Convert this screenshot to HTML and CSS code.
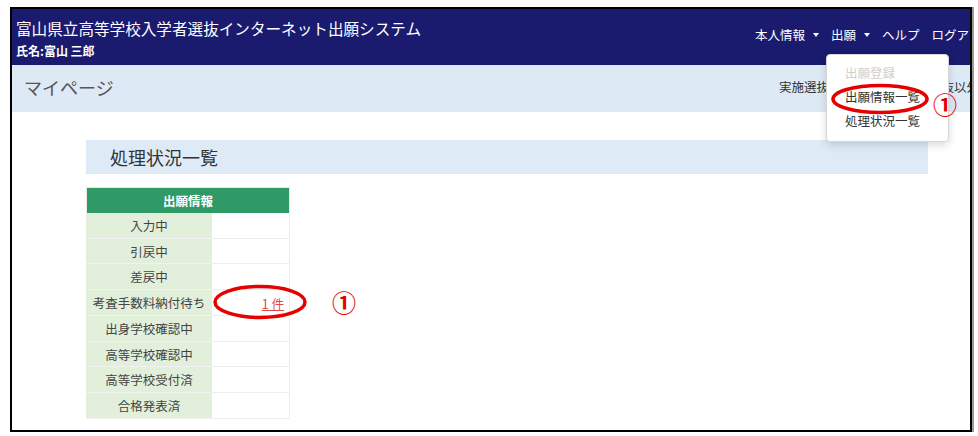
FILE: index.html
```html
<!DOCTYPE html>
<html lang="ja">
<head>
<meta charset="utf-8">
<title>処理状況一覧</title>
<link rel="stylesheet" href="styles.css">
</head>
<body>
<div class="frame">
  <div class="page">
    <header class="navbar">
      <div class="brand">
        <div class="title">富山県立高等学校入学者選抜インターネット出願システム</div>
        <div class="user">氏名:富山 三郎</div>
      </div>
      <nav class="menu">
        <span class="item">本人情報<span class="caret"></span></span>
        <span class="item dd">出願<span class="caret"></span>
          <div class="dropdown">
            <div class="dd-item disabled">出願登録</div>
            <div class="dd-item">出願情報一覧</div>
            <div class="dd-item">処理状況一覧</div>
            <svg class="mark mark-dd" width="100" height="32" viewBox="0 0 100 32"><ellipse cx="50" cy="16" rx="47" ry="13.5" fill="none" stroke="#e60000" stroke-width="3.5"/></svg>
            <span class="num num-dd">①</span>
          </div>
        </span>
        <span class="item">ヘルプ</span>
        <span class="item">ログアウト</span>
      </nav>
    </header>
    <div class="pagehead">
      <h1 class="pagetitle">マイページ</h1>
      <span class="info">実施選抜：一般選抜・特色選抜以外</span>
    </div>
    <main class="container">
      <h2 class="section">処理状況一覧</h2>
      <div class="status">
        <div class="grid">
          <div class="head">出願情報</div>
          <div class="lbl">入力中</div><div class="val"></div>
          <div class="lbl">引戻中</div><div class="val"></div>
          <div class="lbl">差戻中</div><div class="val"></div>
          <div class="lbl">考査手数料納付待ち</div><div class="val"><a class="count" href="#">1&nbsp;件</a></div>
          <div class="lbl">出身学校確認中</div><div class="val"></div>
          <div class="lbl">高等学校確認中</div><div class="val"></div>
          <div class="lbl">高等学校受付済</div><div class="val"></div>
          <div class="lbl">合格発表済</div><div class="val"></div>
        </div>
        <svg class="mark mark-tbl" width="96" height="36" viewBox="0 0 96 36"><ellipse cx="48" cy="18" rx="45" ry="15.5" fill="none" stroke="#e60000" stroke-width="3.5"/></svg>
        <span class="num num-tbl">①</span>
      </div>
    </main>
  </div>
</div>
</body>
</html>
```

FILE: styles.css
```css
* { box-sizing: border-box; }
html, body { margin: 0; padding: 0; background: #fff; }
body {
  font-family: "Noto Sans CJK JP", "Noto Sans", sans-serif;
  color: #333;
}
.frame {
  margin: 7px 0 0 10px;
  width: 962px;
  height: 425px;
  border: 2px solid #000;
  box-shadow: 1px 1px 0 1px #9a9a9a;
  overflow: hidden;
}
.page {
  width: 1000px;
  position: relative;
}
.navbar {
  display: flex;
  justify-content: space-between;
  background: #1a1a6e;
  height: 56px;
  padding: 0 18px 0 4px;
  color: #fff;
}
.brand {
  padding-top: 8px;
}
.title {
  font-size: 15.6px;
  line-height: 22px;
}
.user {
  font-size: 12px;
  font-weight: bold;
  line-height: 18px;
  margin-top: 3px;
}
.menu {
  display: flex;
  gap: 12px;
  padding-top: 17px;
  align-self: flex-start;
}
.item {
  font-size: 12.5px;
  line-height: 18px;
  display: flex;
  align-items: center;
  white-space: nowrap;
}
.caret {
  display: inline-block;
  margin-left: 8px;
  width: 0;
  height: 0;
  border-top: 4px solid #fff;
  border-left: 3.5px solid transparent;
  border-right: 3.5px solid transparent;
}
.dd { position: relative; }
.dropdown {
  position: absolute;
  top: 28px;
  left: -5px;
  width: 123px;
  background: #fff;
  border: 1px solid #d6d6d6;
  border-radius: 4px;
  box-shadow: 0 3px 8px rgba(0,0,0,0.15);
  padding: 6px 0 8px;
  z-index: 10;
}
.dd-item {
  font-size: 12.5px;
  line-height: 24px;
  color: #333;
  padding-left: 18px;
}
.dd-item.disabled { color: #cfcfcf; }
.mark { position: absolute; }
.num {
  position: absolute;
  color: #e60000;
  font-size: 24px;
  line-height: 24px;
  font-weight: bold;
}
.mark-dd { left: 3px; top: 28px; }
.num-dd { left: 106px; top: 37px; }
.pagehead {
  display: flex;
  justify-content: space-between;
  align-items: center;
  background: #dde9f5;
  height: 47px;
  padding: 0 33px 4px 12px;
}
.pagetitle {
  margin: 0;
  font-size: 18px;
  font-weight: normal;
  color: #555;
}
.info {
  font-size: 12.5px;
  color: #333;
}
.container {
  margin-left: 74px;
  width: 842px;
  padding-top: 28px;
}
.section {
  margin: 0;
  height: 34px;
  background: #deebf7;
  font-size: 18px;
  font-weight: normal;
  line-height: 34px;
  padding-left: 24px;
  color: #333;
}
.status {
  position: relative;
  margin-top: 13px;
}
.grid {
  display: grid;
  grid-template-columns: 126px 78px;
  grid-auto-rows: 25.75px;
  width: 204px;
}
.head {
  grid-column: 1 / 3;
  background: #2f9a66;
  color: #fff;
  font-weight: bold;
  font-size: 12.5px;
  text-align: center;
  line-height: 26px;
  border: 1px solid #e8e8e8;
  border-bottom: none;
}
.lbl {
  background: #e2efda;
  font-size: 12.5px;
  color: #444;
  text-align: center;
  line-height: 25px;
  border-bottom: 1px solid #f2f2f2;
}
.val {
  background: #fff;
  border-right: 1px solid #ececec;
  border-bottom: 1px solid #ececec;
  text-align: right;
  padding-right: 5px;
  line-height: 25px;
}
.count {
  font-size: 12.5px;
  color: #e0474c;
  text-decoration: underline;
}
.mark-tbl { left: 126px; top: 97px; }
.num-tbl { left: 246px; top: 103px; }
```
